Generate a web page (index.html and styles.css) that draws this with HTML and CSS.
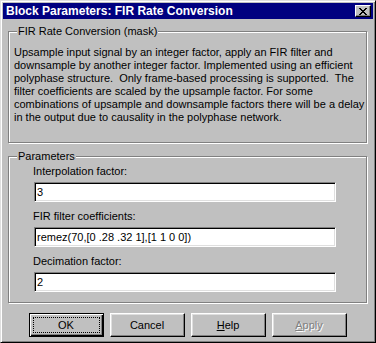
FILE: index.html
```html
<!DOCTYPE html>
<html lang="en">
	<head>
		<meta charset="utf-8">
		<title>Block Parameters: FIR Rate Conversion</title>
		<link rel="stylesheet" href="styles.css">
	</head>
	<body>
		<div class="window">
			<div class="titlebar">
				<span class="title">Block Parameters: FIR Rate Conversion</span>
				<span class="close">
					<svg width="8" height="7" viewBox="0 0 8 7">
						<path d="M0 0h2v1h1v1h2v-1h1v-1h2v1h-1v1h-1v1h-1v1h1v1h1v1h1v1h-2v-1h-1v-1h-2v1h-1v1h-2v-1h1v-1h1v-1h1v-1h-1v-1h-1v-1h-1z" fill="#000"/>
					</svg>
				</span>
			</div>

			<div class="content">
				<fieldset class="group desc">
					<legend>FIR Rate Conversion (mask)</legend>
					<p class="text">Upsample input signal by an integer factor, apply an FIR filter and
downsample by another integer factor. Implemented using an efficient
polyphase structure.  Only frame-based processing is supported.  The
filter coefficients are scaled by the upsample factor. For some
combinations of upsample and downsample factors there will be a delay
in the output due to causality in the polyphase network.</p>
				</fieldset>

				<fieldset class="group params">
					<legend>Parameters</legend>
					<div class="field">
						<label>Interpolation factor:</label>
						<input class="edit" type="text" value="3">
					</div>
					<div class="field">
						<label>FIR filter coefficients:</label>
						<input class="edit" type="text" value="remez(70,[0 .28 .32 1],[1 1 0 0])">
					</div>
					<div class="field">
						<label>Decimation factor:</label>
						<input class="edit" type="text" value="2">
					</div>
				</fieldset>

				<div class="buttons">
					<button class="btn default"><span class="focus">OK</span></button>
					<button class="btn">Cancel</button>
					<button class="btn"><u>H</u>elp</button>
					<button class="btn disabled"><u>A</u>pply</button>
				</div>
			</div>
		</div>
	</body>
</html>
```

FILE: styles.css
```css
body {
	margin: 0;
	background-color: #c0c0c0;
	font-family: "Liberation Sans", Arial, sans-serif;
	font-size: 11px;
	color: #000;
}

.window {
	width: 376px;
	height: 343px;
	box-sizing: border-box;
	background-color: #c0c0c0;
	border: 1px solid;
	border-color: #dfdfdf #000 #000 #dfdfdf;
	box-shadow: inset 1px 1px #fff, inset -1px -1px #808080;
	padding: 2px;
}

.titlebar {
	height: 16px;
	background-color: #000080;
	display: flex;
	align-items: center;
	justify-content: space-between;
	padding: 0 2px 0 3px;
}

.title {
	color: #fff;
	font-weight: bold;
	font-size: 12px;
	white-space: nowrap;
}

.close {
	width: 16px;
	height: 12px;
	box-sizing: border-box;
	background-color: #c0c0c0;
	border: 1px solid;
	border-color: #fff #000 #000 #fff;
	box-shadow: inset -1px -1px #808080;
	display: flex;
	align-items: center;
	justify-content: center;
}

.content {
	padding: 6px 6px 0 5px;
}

.group {
	margin: 0;
	border: 1px solid #808080;
	box-shadow: inset 1px 1px #fff, 1px 1px #fff;
	padding: 0 6px 0 5px;
	min-width: 0;
}

.group legend {
	padding: 0 1px;
	margin-left: 3px;
	line-height: 13px;
	background-color: #c0c0c0;
}

.desc {
	height: 118px;
	box-sizing: border-box;
}

.text {
	margin: 8px 0 0;
	white-space: pre;
	line-height: 13px;
}

.params {
	margin-top: 7px;
	height: 153px;
	box-sizing: border-box;
}

.field {
	display: flex;
	flex-direction: column;
	align-items: flex-start;
	margin: 0 0 6px 19px;
}

.field label {
	line-height: 13px;
	padding: 2px 0 4px 0;
}

.edit {
	width: 302px;
	height: 20px;
	box-sizing: border-box;
	margin: 0 0 0 1px;
	padding: 0 2px;
	font-family: inherit;
	font-size: 11px;
	background-color: #fff;
	border: 1px solid;
	border-color: #808080 #fff #fff #808080;
	box-shadow: inset 1px 1px #000, inset -1px -1px #dfdfdf;
	outline: none;
}

.buttons {
	display: flex;
	justify-content: center;
	gap: 6px;
	margin-top: 10px;
}

.btn {
	width: 75px;
	height: 24px;
	box-sizing: border-box;
	padding: 0;
	font-family: inherit;
	font-size: 11px;
	color: #000;
	background-color: #c0c0c0;
	border: 1px solid;
	border-color: #fff #000 #000 #fff;
	box-shadow: inset -1px -1px #808080, inset 1px 1px #dfdfdf;
}

.btn.default {
	border: 1px solid #000;
	box-shadow: inset 1px 1px #fff, inset -1px -1px #000, inset -2px -2px #808080;
	display: flex;
	padding: 3px;
}

.btn .focus {
	flex: 1;
	border: 1px dotted #000;
	display: flex;
	align-items: center;
	justify-content: center;
}

.btn.disabled {
	color: #808080;
	text-shadow: 1px 1px #fff;
}
```
